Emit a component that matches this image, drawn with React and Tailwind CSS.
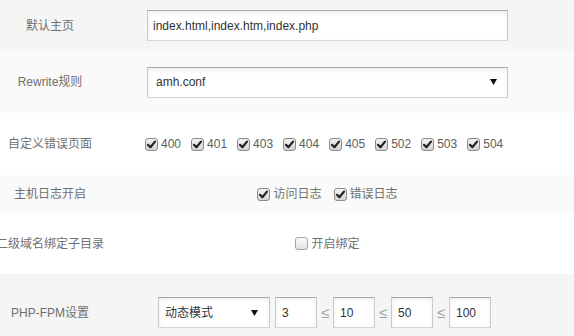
import React from "react";

const font = "font-[family-name:Liberation_Sans,Noto_Sans_CJK_SC,sans-serif]";
const field =
  "h-[31px] border border-[#cacaca] border-t-[#a9a9a9] border-b-[#d6d6d6] bg-white shadow-[inset_0_2px_4px_rgba(0,0,0,0.07)] text-[12px] text-[#333] outline-none";

const Arrow = () => (
  <svg width="7" height="6" viewBox="0 0 7 6" className="shrink-0">
    <polygon points="0,0 7,0 3.5,6" fill="#111" />
  </svg>
);

const Check = ({ checked }) => (
  <span
    className={
      "flex h-[13px] w-[13px] shrink-0 items-center justify-center rounded-[3px] border " +
      (checked
        ? "border-[#8c8c8c] bg-gradient-to-b from-[#f2f2f2] to-[#d4d4d4]"
        : "border-[#a3a3a3] bg-gradient-to-b from-[#fbfbfb] to-[#e2e2e2]")
    }
  >
    {checked && (
      <svg width="11" height="11" viewBox="0 0 11 11">
        <path d="M2 5.8 L4.4 8.2 L9 2.6" fill="none" stroke="#222" strokeWidth="2.2" strokeLinecap="round" strokeLinejoin="round" />
      </svg>
    )}
  </span>
);

const CheckItem = ({ label, checked = true, color = "text-[#5e5e5e]" }) => (
  <label className="flex items-center gap-[3px]">
    <Check checked={checked} />
    <span className={color}>{label}</span>
  </label>
);

const Label = ({ children }) => (
  <div className="flex w-[100px] shrink-0 justify-center whitespace-nowrap text-[12px] text-[#707070]">
    {children}
  </div>
);

const Row = ({ bg, h, children, top }) => (
  <div className={`flex ${h} ${bg} ${top ? "items-start pt-[23px]" : "items-center"}`}>{children}</div>
);

export default function App() {
  const codes = ["400", "401", "403", "404", "405", "502", "503", "504"];
  return (
    <div className={`${font} h-[336px] w-[574px] overflow-hidden bg-white`}>
      <Row bg="bg-[#f5f5f5]" h="h-[51px]">
        <Label>默认主页</Label>
        <div className="ml-[41px] w-[373px] pl-[6px]">
          <input
            readOnly
            value="index.html,index.htm,index.php"
            className={`${field} w-[361px] px-[5px]`}
          />
        </div>
      </Row>

      <Row bg="bg-[#fafafa]" h="h-[62px]">
        <Label>Rewrite规则</Label>
        <div className="ml-[41px] w-[373px] pl-[6px]">
          <div className={`${field} flex w-[361px] items-center justify-between pl-[8px] pr-[10px]`}>
            <span>amh.conf</span>
            <Arrow />
          </div>
        </div>
      </Row>

      <Row bg="bg-white" h="h-[62px]">
        <Label>自定义错误页面</Label>
        <div className="ml-[41px] flex w-[373px] gap-[10px] pl-[4px] text-[12px]">
          {codes.map((c) => (
            <CheckItem key={c} label={c} />
          ))}
        </div>
      </Row>

      <Row bg="bg-[#fafafa]" h="h-[38px]">
        <Label>主机日志开启</Label>
        <div className="ml-[41px] flex w-[373px] justify-center gap-[12px] text-[12px]">
          <CheckItem label="访问日志" color="text-[#707070]" />
          <CheckItem label="错误日志" color="text-[#707070]" />
        </div>
      </Row>

      <Row bg="bg-white" h="h-[61px]">
        <Label>二级域名绑定子目录</Label>
        <div className="ml-[41px] flex w-[373px] justify-center text-[12px]">
          <CheckItem label="开启绑定" checked={false} color="text-[#707070]" />
        </div>
      </Row>

      <Row bg="bg-[#f5f5f5]" h="h-[62px]" top>
        <div className="flex h-[31px] items-center">
          <Label>PHP-FPM设置</Label>
        </div>
        <div className="ml-[41px] flex w-[373px] items-center pl-[17px]">
          <div className={`${field} flex w-[112px] items-center justify-between pl-[6px] pr-[11px]`}>
            <span>动态模式</span>
            <Arrow />
          </div>
          <div className="ml-[5px] flex items-center">
            {["3", "10", "50", "100"].map((v, i) => (
              <React.Fragment key={v}>
                {i > 0 && (
                  <span className="w-[16px] text-center text-[15px] leading-none text-[#a0a0a0]">≤</span>
                )}
                <input readOnly value={v} className={`${field} w-[42px] px-[6px]`} />
              </React.Fragment>
            ))}
          </div>
        </div>
      </Row>
    </div>
  );
}
